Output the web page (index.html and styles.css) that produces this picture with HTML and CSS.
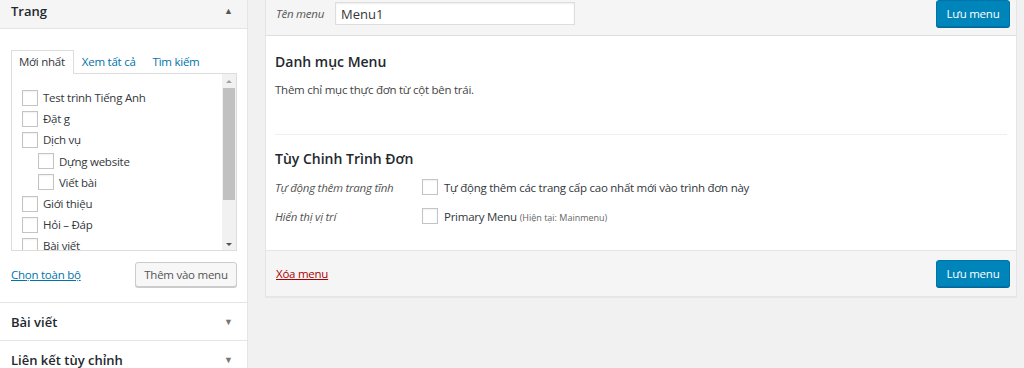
FILE: index.html
```html
<!DOCTYPE html>
<html lang="vi">
<head>
<meta charset="utf-8">
<title>Menu</title>
<link rel="stylesheet" href="styles.css">
</head>
<body>
<div class="page">
  <aside class="side">
    <section class="acc">
      <h3 class="acc-h acc-h-top"><span>Trang</span><span class="arr">&#9650;</span></h3>
      <div class="acc-body">
        <ul class="tabs">
          <li class="tab active">Mới nhất</li>
          <li class="tab">Xem tất cả</li>
          <li class="tab">Tìm kiếm</li>
        </ul>
        <div class="listbox">
          <ul class="items">
            <li class="item"><span class="cb"></span>Test trình Tiếng Anh</li>
            <li class="item"><span class="cb"></span>Đặt g</li>
            <li class="item"><span class="cb"></span>Dịch vụ</li>
            <li class="item sub"><span class="cb"></span>Dựng website</li>
            <li class="item sub"><span class="cb"></span>Viết bài</li>
            <li class="item"><span class="cb"></span>Giới thiệu</li>
            <li class="item"><span class="cb"></span>Hỏi – Đáp</li>
            <li class="item"><span class="cb"></span>Bài viết</li>
          </ul>
          <div class="sbar">
            <span class="sb-up"></span>
            <span class="sb-thumb"></span>
            <span class="sb-down"></span>
          </div>
        </div>
        <div class="actions">
          <a class="link" href="#">Chọn toàn bộ</a>
          <button class="btn">Thêm vào menu</button>
        </div>
      </div>
    </section>
    <section class="acc">
      <h3 class="acc-h"><span>Bài viết</span><span class="arr down">&#9660;</span></h3>
    </section>
    <section class="acc">
      <h3 class="acc-h"><span>Liên kết tùy chỉnh</span><span class="arr down">&#9660;</span></h3>
    </section>
  </aside>

  <main class="menu-box">
    <div class="mb-head">
      <label class="lbl-it">Tên menu</label>
      <input class="name-input" type="text" value="Menu1">
      <button class="btn-primary">Lưu menu</button>
    </div>
    <div class="mb-body">
      <h2 class="h2">Danh mục Menu</h2>
      <p class="desc">Thêm chỉ mục thực đơn từ cột bên trái.</p>
      <div class="sep"></div>
      <h2 class="h2 h2b">Tùy Chinh Trình Đơn</h2>
      <div class="row">
        <span class="lbl-it row-lbl">Tự động thêm trang tĩnh</span>
        <span class="cb"></span>
        <span class="row-txt">Tự động thêm các trang cấp cao nhất mới vào trình đơn này</span>
      </div>
      <div class="row row2">
        <span class="lbl-it row-lbl">Hiển thị vị trí</span>
        <span class="cb"></span>
        <span class="row-txt">Primary Menu <small class="small">(Hiện tại: Mainmenu)</small></span>
      </div>
    </div>
    <div class="mb-foot">
      <a class="del" href="#">Xóa menu</a>
      <button class="btn-primary">Lưu menu</button>
    </div>
  </main>
  <div class="rstrip"></div>
</div>
</body>
</html>
```

FILE: styles.css
```css
* { box-sizing: border-box; }
html, body { margin: 0; padding: 0; }
body {
  background: #f1f1f1;
  font-family: "Open Sans", "Noto Sans", sans-serif;
  font-size: 11.5px;
  letter-spacing: -0.25px;
  color: #32373c;
  width: 1024px;
  height: 368px;
  overflow: hidden;
}
ul { list-style: none; margin: 0; padding: 0; }
.page { display: flex; align-items: flex-start; }

/* Left column */
.side {
  width: 248px;
  background: #fff;
  border-right: 1px solid #e5e5e5;
  flex: none;
  height: 368px;
}
.acc-h {
  margin: 0;
  height: 38px;
  padding: 0 14px 0 11px;
  display: flex;
  align-items: center;
  justify-content: space-between;
  font-size: 13px;
  letter-spacing: 0;
  font-weight: 600;
  color: #23282d;
  border-bottom: 1px solid #e5e5e5;
}
.acc-h-top {
  height: 29px;
  background: #f5f5f5;
  align-items: flex-start;
  padding-top: 2px;
  line-height: 18px;
}
.arr { font-size: 9px; color: #555; }
.arr.down { color: #777; }
.acc-body {
  padding: 21px 11px 15px 11px;
  border-bottom: 1px solid #e5e5e5;
}
.tabs { display: flex; align-items: flex-end; }
.tab {
  padding: 3px 8px 3px 7px;
  line-height: 16px;
  color: #0073aa;
  border: 1px solid transparent;
  border-bottom: 0;
}
.tab.active {
  color: #32373c;
  border-color: #ddd;
  background: #fff;
  position: relative;
  z-index: 1;
  margin-bottom: -1px;
  padding-bottom: 4px;
}
.listbox {
  border: 1px solid #ddd;
  height: 178px;
  width: 226px;
  display: flex;
  overflow: hidden;
}
.items {
  flex: 1;
  padding: 13px 0 0 10px;
  overflow: hidden;
}
.item {
  display: flex;
  align-items: center;
  height: 21.2px;
  white-space: nowrap;
  color: #32373c;
}
.item.sub { padding-left: 16px; }
.cb {
  display: inline-block;
  width: 16px;
  height: 16px;
  border: 1px solid #c4c4c4;
  background: #fff;
  box-shadow: inset 0 1px 2px rgba(0,0,0,.06);
  margin-right: 5px;
  flex: none;
}
.sbar {
  width: 14px;
  flex: none;
  background: #f1f1f1;
  display: flex;
  flex-direction: column;
  align-items: center;
  padding: 6px 0 4px;
}
.sb-up, .sb-down {
  width: 0; height: 0;
  border-left: 3px solid transparent;
  border-right: 3px solid transparent;
}
.sb-up { border-bottom: 3px solid #a3a3a3; }
.sb-down { border-top: 3px solid #505050; margin-top: auto; }
.sb-thumb {
  width: 12px;
  height: 112px;
  background: #c1c1c1;
  margin-top: 5px;
}
.actions {
  display: flex;
  justify-content: space-between;
  align-items: center;
  margin-top: 11px;
  width: 226px;
}
.link { color: #0073aa; text-decoration: underline; }
.btn {
  font: inherit;
  letter-spacing: inherit;
  color: #555;
  background: #f7f7f7;
  border: 1px solid #ccc;
  border-radius: 3px;
  box-shadow: 0 1px 0 #ccc;
  height: 25px;
  width: 102px;
  padding: 0;
}

/* Right box */
.menu-box {
  margin-left: 17px;
  width: 752px;
  background: #fff;
  border: 1px solid #e5e5e5;
  border-top: 0;
  box-shadow: 0 1px 1px rgba(0,0,0,.04);
  flex: none;
}
.mb-head {
  height: 36px;
  padding: 0 6px 8px 10px;
  background: #f5f5f5;
  border-bottom: 1px solid #dedede;
  display: flex;
  align-items: center;
}
.lbl-it { font-style: italic; color: #555; }
.name-input {
  margin-left: 11px;
  width: 240px;
  height: 23px;
  border: 1px solid #ddd;
  box-shadow: inset 0 1px 2px rgba(0,0,0,.07);
  padding: 0 5px;
  font: inherit;
  font-size: 13px;
  letter-spacing: 0;
  color: #32373c;
  outline: none;
}
.btn-primary {
  margin-left: auto;
  font: inherit;
  letter-spacing: inherit;
  color: #fff;
  background: #0085ba;
  border: 1px solid #0073aa;
  border-radius: 3px;
  box-shadow: 0 1px 0 #006799;
  height: 27px;
  width: 74px;
  padding: 0;
}
.mb-body { padding: 16px 9px 24px 9px; }
.h2 {
  margin: 0;
  font-size: 14px;
  letter-spacing: 0;
  font-weight: 600;
  line-height: 20px;
  color: #23282d;
}
.desc { margin: 9px 0 0; line-height: 18px; color: #444; }
.sep { height: 1px; background: #eee; margin-top: 35px; }
.h2b { margin-top: 14px; }
.row {
  display: flex;
  align-items: center;
  height: 20px;
  margin-top: 8px;
}
.row2 { margin-top: 9px; }
.row-lbl { width: 147px; }
.row .cb { margin-right: 6px; }
.row-txt { color: #32373c; }
.small { font-size: 9px; color: #666; letter-spacing: 0; }
.mb-foot {
  height: 46px;
  background: #f5f5f5;
  border-top: 1px solid #e5e5e5;
  display: flex;
  align-items: center;
  padding: 0 6px 0 10px;
}
.del { color: #a00; text-decoration: underline; }
.rstrip { flex: 1; }
```
